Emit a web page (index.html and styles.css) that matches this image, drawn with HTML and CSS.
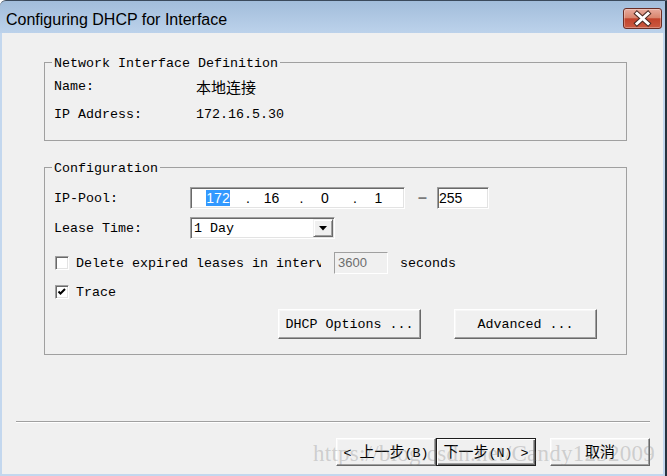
FILE: index.html
```html
<!DOCTYPE html>
<html lang="en">
<head>
  <meta charset="UTF-8" />
  <title>Configuring DHCP for Interface</title>
  <link rel="stylesheet" href="styles.css">
</head>
<body>
  <div class="window">
    <div class="titlebar">
      <span class="title">Configuring DHCP for Interface</span>
      <div class="close-btn">
        <svg width="37" height="19" viewBox="0 0 37 19">
          <path d="M13 4.5 L24 14.5 M24 4.5 L13 14.5" stroke="#4a2a24" stroke-width="5" stroke-linecap="square"/>
          <path d="M13 4.5 L24 14.5 M24 4.5 L13 14.5" stroke="#fff" stroke-width="3" stroke-linecap="square"/>
        </svg>
      </div>
    </div>

    <div class="client">
      <fieldset class="group group-iface">
        <legend>Network Interface Definition</legend>
        <div class="info-grid">
          <span>Name:</span><span class="cjk">本地连接</span>
          <span>IP Address:</span><span>172.16.5.30</span>
        </div>
      </fieldset>

      <fieldset class="group group-config">
        <legend>Configuration</legend>

        <div class="row row-pool">
          <span class="label">IP-Pool:</span>
          <div class="field ip-box">
            <span class="octet"><span class="selected">172</span></span><span class="dot">.</span>
            <span class="octet">16</span><span class="dot">.</span>
            <span class="octet">0</span><span class="dot">.</span>
            <span class="octet">1</span>
          </div>
          <span class="dash">–</span>
          <div class="field end-box">255</div>
        </div>

        <div class="row row-lease">
          <span class="label">Lease Time:</span>
          <div class="field combo">
            <span class="combo-text">1 Day</span>
            <span class="combo-btn">
              <svg width="8" height="5" viewBox="0 0 8 5"><polygon points="0,0 8,0 4,4.5" fill="#000"/></svg>
            </span>
          </div>
        </div>

        <div class="row row-delete">
          <span class="check"></span>
          <span class="check-text clipped">Delete expired leases in interval</span>
          <div class="field interval-box">3600</div>
          <span class="unit">seconds</span>
        </div>

        <div class="row row-trace">
          <span class="check">
            <svg width="12" height="12" viewBox="0 0 12 12"><polyline points="2.5,5.5 4.5,7.5 9,3" fill="none" stroke="#000" stroke-width="2"/></svg>
          </span>
          <span class="check-text">Trace</span>
        </div>

        <div class="row row-actions">
          <button class="btn action-btn">DHCP Options ...</button>
          <button class="btn action-btn">Advanced ...</button>
        </div>
      </fieldset>

      <div class="separator"></div>

      <div class="wizard-buttons">
        <button class="btn wiz-btn">&lt; <span class="cjk">上一步</span>(B)</button>
        <button class="btn wiz-btn default"><span class="cjk">下一步</span>(N) &gt;</button>
        <button class="btn wiz-btn cancel"><span class="cjk">取消</span></button>
      </div>

      <div class="watermark">https://blog.csdn.net/Candy1232009</div>
    </div>
  </div>
</body>
</html>
```

FILE: styles.css
```css
body {
  margin: 0;
  background: #fff;
  overflow: hidden;
}
.window {
  width: 667px;
  height: 476px;
  box-sizing: border-box;
  display: flex;
  flex-direction: column;
  border-top: 1px solid #3b4a5c;
  border-right: 2px solid #27323f;
  border-top-left-radius: 6px;
  padding: 0 2px 2px 2px;
  background: linear-gradient(#a2bddb, #bcd2eb 32px, #c3d7ee 32px);
}
.titlebar {
  height: 32px;
  display: flex;
  justify-content: space-between;
  align-items: flex-start;
}
.title {
  font-family: "Liberation Sans", Arial, sans-serif;
  font-size: 16px;
  line-height: 20px;
  margin: 9px 0 0 4px;
  color: #000;
}
.close-btn {
  width: 39px;
  height: 21px;
  box-sizing: border-box;
  margin: 7px 1px 0 0;
  border: 1px solid #6a2d25;
  border-radius: 3px;
  background: linear-gradient(#e8ab9e 0%, #d9866f 45%, #c2432c 52%, #cb5b42 100%);
  box-shadow: inset 0 0 0 1px rgba(255, 255, 255, 0.3);
}
.close-btn svg {
  display: block;
}

.client {
  flex: 1;
  position: relative;
  background: #f0f0f0;
  padding: 0 13px 0 14px;
  display: flex;
  flex-direction: column;
  font-family: "Liberation Mono", "Noto Sans CJK SC", monospace;
  font-size: 13.33px;
  color: #000;
}
.cjk {
  font-family: "Noto Sans CJK SC", sans-serif;
  font-size: 15px;
}

/* group boxes */
.group {
  width: 583px;
  box-sizing: border-box;
  margin: 0 0 0 28px;
  border: 1px solid #a0a0a0;
  padding: 0 9px;
  min-width: 0;
}
.group legend {
  box-sizing: border-box;
  padding: 2px 2px 0 2px;
  margin-left: -2px;
  line-height: 15px;
  height: 17px;
}
.group-iface {
  margin-top: 21px;
  padding-top: 8px;
  padding-bottom: 17px;
}
.group-config {
  margin-top: 18px;
  padding-top: 11px;
  padding-bottom: 15px;
}
.info-grid {
  display: grid;
  grid-template-columns: 142px 1fr;
  grid-auto-rows: 16px;
  row-gap: 12px;
  line-height: 16px;
}

/* rows in the configuration group */
.row {
  display: flex;
  align-items: center;
  line-height: 16px;
}
.label,
.check-text,
.unit,
.combo-text {
  padding-top: 2px;
}
.label {
  width: 136px;
}
.row-pool,
.row-lease,
.row-delete {
  height: 22px;
}
.row-lease {
  margin-top: 8px;
}
.row-delete {
  margin-top: 13px;
}
.row-trace {
  margin-top: 10px;
  height: 16px;
}
.row-actions {
  margin-top: 9px;
  justify-content: flex-end;
  gap: 33px;
  margin-right: 20px;
}

.field {
  box-sizing: border-box;
  height: 22px;
  background: #fff;
  border: 1px solid;
  border-color: #a0a0a0 #fff #fff #a0a0a0;
  box-shadow: inset 1px 1px 0 #696969, inset -1px -1px 0 #e3e3e3;
}
.ip-box {
  width: 215px;
  display: flex;
  align-items: center;
  padding-left: 12px;
  font-family: "Liberation Sans", Arial, sans-serif;
  font-size: 14px;
}
.octet {
  width: 30px;
  text-align: center;
  line-height: 15px;
}
.dot {
  width: 23.5px;
  padding-left: 13px;
  box-sizing: border-box;
}
.selected {
  background: #3399ff;
  color: #fff;
}
.dash {
  width: 32px;
  box-sizing: border-box;
  padding-left: 3px;
  text-align: center;
  font-family: "Liberation Sans", Arial, sans-serif;
  font-weight: bold;
  font-size: 16px;
  color: #7a7a7a;
}
.end-box {
  width: 52px;
  padding: 2px 0 0 1px;
  font-family: "Liberation Sans", Arial, sans-serif;
  font-size: 14px;
  line-height: 16px;
}
.combo {
  width: 145px;
  display: flex;
  align-items: center;
  justify-content: space-between;
  padding: 0 1px 0 3px;
}
.combo-btn {
  width: 20px;
  height: 18px;
  box-sizing: border-box;
  display: flex;
  align-items: center;
  justify-content: center;
  background: #f0f0f0;
  border: 1px solid;
  border-color: #f0f0f0 #696969 #696969 #f0f0f0;
  box-shadow: inset 1px 1px 0 #fff, inset -1px -1px 0 #a0a0a0;
}
.combo-btn svg {
  display: block;
}

.check {
  width: 14px;
  height: 14px;
  box-sizing: border-box;
  margin-left: 1px;
  background: #fff;
  border: 1px solid;
  border-color: #a0a0a0 #fff #fff #a0a0a0;
  box-shadow: inset 1px 1px 0 #696969, inset -1px -1px 0 #e3e3e3;
}
.check svg {
  display: block;
}
.check-text {
  margin-left: 7px;
  white-space: nowrap;
}
.clipped {
  width: 245px;
  overflow: hidden;
}
.interval-box {
  width: 54px;
  margin-left: 13px;
  padding: 2px 0 0 3px;
  background: #f0f0f0;
  border-color: #a0a0a0 #fff #fff #a0a0a0;
  box-shadow: none;
  font-family: "Liberation Sans", Arial, sans-serif;
  font-size: 13px;
  line-height: 16px;
  color: #6d6d6d;
}
.unit {
  margin-left: 12px;
}

/* push buttons */
.btn {
  box-sizing: border-box;
  margin: 0;
  padding: 1px 0 0 0;
  font: inherit;
  color: #000;
  background: #f0f0f0;
  border: 1px solid;
  border-color: #fff #696969 #696969 #fff;
  box-shadow: inset -1px -1px 0 #a0a0a0, inset 1px 1px 0 #f7f7f7;
}
.action-btn {
  width: 143px;
  height: 30px;
}

.separator {
  height: 1px;
  margin: 66px 0 0 0;
  background: #a0a0a0;
  border-bottom: 1px solid #fff;
}
.wizard-buttons {
  display: flex;
  justify-content: flex-end;
  margin-top: 15px;
}
.wiz-btn {
  width: 100px;
  height: 28px;
  line-height: 16px;
}
.wiz-btn.default {
  border-color: #1e1e1e;
  box-shadow: inset 1px 1px 0 #fff, inset -1px -1px 0 #696969, inset -2px -2px 0 #a0a0a0;
}
.wiz-btn.cancel {
  margin-left: 14px;
}

.watermark {
  position: absolute;
  left: 311px;
  top: 409px;
  font-family: "Liberation Serif", "Times New Roman", serif;
  font-size: 23px;
  line-height: 23px;
  letter-spacing: 0.25px;
  color: rgba(120, 120, 120, 0.3);
  white-space: nowrap;
  pointer-events: none;
}
```
